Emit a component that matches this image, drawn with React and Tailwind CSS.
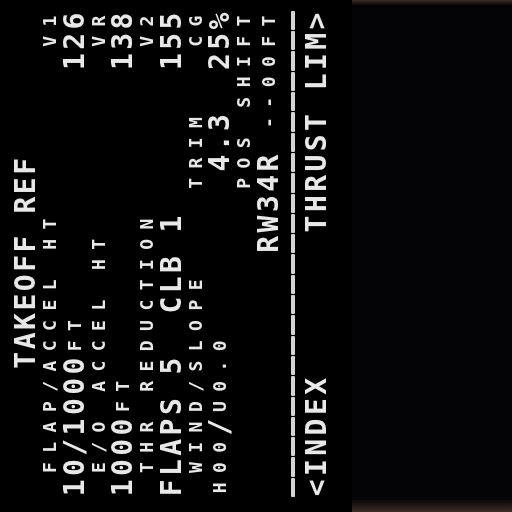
import React from "react";

const big = "text-[28px]";
const small = "text-[18px]";

// each line of the CDU is a 24 column grid: [column, text, size]
const lines = [
  [[1, "FLAP/ACCEL HT", "s"], [22, "V1", "s"]],
  [[0, "10/1000", "l"], [7, "FT", "s"], [21, "126", "l"]],
  [[1, "E/O ACCEL HT", "s"], [22, "VR", "s"]],
  [[0, "1000", "l"], [4, "FT", "s"], [21, "138", "l"]],
  [[1, "THR REDUCTION", "s"], [22, "V2", "s"]],
  [[0, "FLAPS 5  CLB 1", "l"], [21, "155", "l"]],
  [[1, "WIND/SLOPE", "s"], [15, "TRIM", "s"], [22, "CG", "s"]],
  [[0, "H00", "s"], [3, "/", "l"], [4, "U0.0", "s"], [16, "4.3", "l"], [21, "25%", "l"]],
  [[15, "POS SHIFT", "s"]],
  [[12, "RW34R", "l"], [18, "--00FT", "s"]],
  "dash",
  [[0, "<INDEX", "l"], [13, "THRUST LIM>", "l"]],
];

function toCells(segs) {
  const cells = Array.from({ length: 24 }, () => [" ", "s"]);
  segs.forEach(([col, text, size]) => {
    text.split("").forEach((ch, i) => {
      cells[col + i] = [ch, size];
    });
  });
  return cells;
}

const Row = ({ segs }) => (
  <div className="flex items-center h-[24.25px] pl-[14px]">
    {toCells(segs).map(([ch, size], i) => (
      <span
        key={i}
        className={`inline-block w-[20.3px] text-center whitespace-pre leading-[24px] ${size === "l" ? big : small}`}
      >
        {ch}
      </span>
    ))}
  </div>
);

const DashRow = () => (
  <div className="flex items-center h-[24.25px] pl-[15px]">
    {Array.from({ length: 24 }).map((_, i) => (
      <div key={i} className="w-[20.3px] pr-[1px]">
        <div className="h-[4px] bg-[#d4d4d4] rounded-[1px]"></div>
      </div>
    ))}
  </div>
);

export default function App() {
  return (
    <div className="relative w-[512px] h-[512px] overflow-hidden bg-black">
      <div className="w-[512px] h-[512px] -rotate-90 flex flex-col">
        {/* the screen */}
        <div
          className="h-[352px] bg-black text-[#e8e8e8] font-bold pt-[14px] blur-[0.5px]"
          style={{ fontFamily: '"DejaVu Sans Mono", "Liberation Mono", monospace' }}
        >
          <div className="flex items-center h-[24.25px] pl-[142px]">
            {"TAKEOFF REF".split("").map((ch, i) => (
              <span key={i} className={`inline-block w-[19.4px] text-center whitespace-pre leading-[24px] ${big}`}>
                {ch}
              </span>
            ))}
          </div>
          {lines.map((l, i) => (l === "dash" ? <DashRow key={i} /> : <Row key={i} segs={l} />))}
        </div>
        {/* bezel beside the screen */}
        <div className="flex-1 flex">
          <div className="w-[12px] bg-linear-to-r from-[#3c2e2a] to-[#0b0808]"></div>
          <div className="flex-1 bg-[#040406]"></div>
          <div className="w-[5px] bg-linear-to-l from-[#3c2e2a] to-[#0b0808]"></div>
        </div>
      </div>
    </div>
  );
}
